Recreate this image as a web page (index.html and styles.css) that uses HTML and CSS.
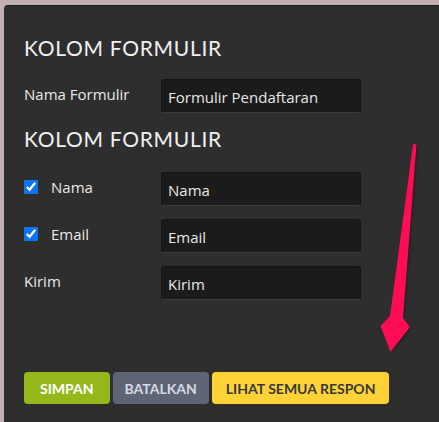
FILE: index.html
```html
<!DOCTYPE html>
<html lang="id">
<head>
  <meta charset="UTF-8">
  <title>Kolom Formulir</title>
  <link rel="stylesheet" href="styles.css">
</head>
<body>
  <div class="panel">
    <h2 class="judul">KOLOM FORMULIR</h2>
    <div class="baris-form">
      <label class="label">Nama Formulir</label>
      <input class="isian" type="text" value="Formulir Pendaftaran">
    </div>

    <h2 class="judul judul-kedua">KOLOM FORMULIR</h2>
    <div class="baris-form daftar-kolom">
      <label class="label cek"><input type="checkbox" checked> Nama</label>
      <input class="isian" type="text" value="Nama">

      <label class="label cek"><input type="checkbox" checked> Email</label>
      <input class="isian" type="text" value="Email">

      <label class="label">Kirim</label>
      <input class="isian" type="text" value="Kirim">
    </div>

    <div class="tombol-tombol">
      <button class="tombol simpan">SIMPAN</button>
      <button class="tombol batal">BATALKAN</button>
      <button class="tombol respon">LIHAT SEMUA RESPON</button>
    </div>

    <!-- panah penunjuk -->
    <svg class="panah" width="50" height="225" viewBox="0 0 50 225">
      <polygon points="43,9 46.5,9.5 33,183 40,192 20.5,217 10.5,191 20,181" fill="#ff0c57"/>
    </svg>
  </div>
</body>
</html>
```

FILE: styles.css
```css
body {
  margin: 0;
  background-color: #c3afb1;
  font-family: "Open Sans", sans-serif;
}
.panel {
  position: relative;
  margin: 5px 0 0 4px;
  height: 417px;
  box-sizing: border-box;
  padding: 30px 0 0 20px;
  background-color: #2e2e2e;
  border-top: 1px solid #1f1f1f;
  border-top-left-radius: 4px;
}
.judul {
  margin: 0 0 19px;
  font-family: Lato, sans-serif;
  font-weight: normal;
  font-size: 21px;
  line-height: 24px;
  letter-spacing: 0.7px;
  color: #f0f0f0;
}
.judul-kedua {
  margin-top: 14px;
  margin-bottom: 21px;
}
.baris-form {
  display: grid;
  grid-template-columns: 137px 200px;
  row-gap: 13px;
  align-items: center;
}
.label {
  margin-bottom: 5px;
  font-size: 15px;
  color: #e8e8e8;
}
.cek {
  display: flex;
  align-items: center;
  gap: 13px;
}
.cek input {
  margin: 0;
  width: 14px;
  height: 14px;
  accent-color: #0b74f5;
}
.isian {
  height: 34px;
  box-sizing: border-box;
  padding: 2px 6px 0;
  background-color: #1b1b1b;
  border: 1px solid #141414;
  border-bottom-color: #3b3b3b;
  border-radius: 3px;
  font-family: "Open Sans", sans-serif;
  font-size: 15px;
  color: #e8e8e8;
}
.tombol-tombol {
  display: flex;
  gap: 3px;
  margin-top: 72px;
}
.tombol {
  height: 32px;
  padding: 0 14px;
  border: none;
  border-radius: 4px;
  font-family: Lato, sans-serif;
  font-weight: bold;
  font-size: 14px;
}
.simpan {
  padding: 0 16px;
  background-color: #94b81b;
  color: #ffffff;
}
.batal {
  padding: 0 12px;
  background-color: #5d6577;
  color: #d6dae2;
}
.respon {
  background-color: #ffd338;
  color: #383838;
}
.panah {
  position: absolute;
  left: 366px;
  top: 129px;
  filter: drop-shadow(1px 1px 1px rgba(0, 0, 0, 0.35));
}
```
